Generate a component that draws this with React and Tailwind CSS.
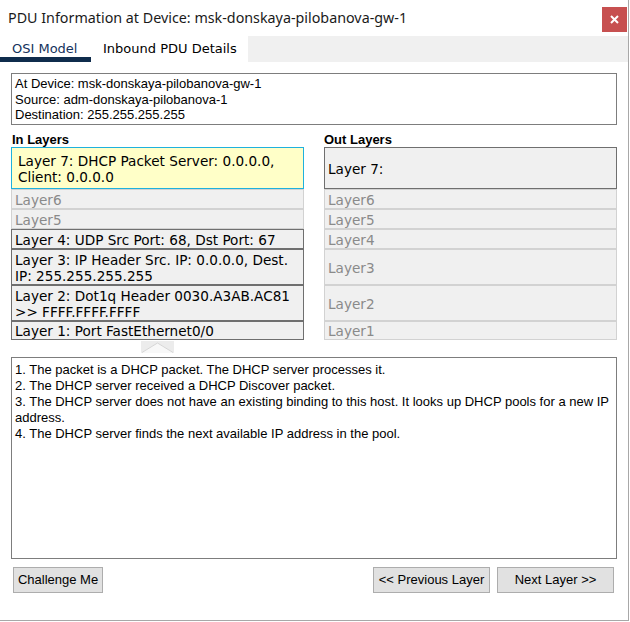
import React from "react";

const inLayers = [
  { lines: ["Layer 7: DHCP Packet Server: 0.0.0.0,", "Client: 0.0.0.0"], h: "h-[42px]", kind: "active" },
  { lines: ["Layer6"], h: "h-[20px]", kind: "off" },
  { lines: ["Layer5"], h: "h-[20px]", kind: "off" },
  { lines: ["Layer 4: UDP Src Port: 68, Dst Port: 67"], h: "h-[20px]", kind: "on" },
  { lines: ["Layer 3: IP Header Src. IP: 0.0.0.0, Dest.", "IP: 255.255.255.255"], h: "h-[36px]", kind: "on" },
  { lines: ["Layer 2: Dot1q Header 0030.A3AB.AC81", ">> FFFF.FFFF.FFFF"], h: "h-[36px]", kind: "on" },
  { lines: ["Layer 1: Port FastEthernet0/0"], h: "h-[19px]", kind: "on" },
];

const outLayers = [
  { lines: ["Layer 7:"], h: "h-[42px]", kind: "on" },
  { lines: ["Layer6"], h: "h-[20px]", kind: "off" },
  { lines: ["Layer5"], h: "h-[20px]", kind: "off" },
  { lines: ["Layer4"], h: "h-[20px]", kind: "off" },
  { lines: ["Layer3"], h: "h-[36px]", kind: "off" },
  { lines: ["Layer2"], h: "h-[36px]", kind: "off" },
  { lines: ["Layer1"], h: "h-[19px]", kind: "off" },
];

const steps = [
  "1. The packet is a DHCP packet. The DHCP server processes it.",
  "2. The DHCP server received a DHCP Discover packet.",
  "3. The DHCP server does not have an existing binding to this host. It looks up DHCP pools for a new IP",
  "address.",
  "4. The DHCP server finds the next available IP address in the pool.",
];

const LayerRow = ({ layer }) => {
  const styles = {
    active: "bg-[#ffffc8] border-[#1fb1dd] text-black pl-[6px]",
    on: "bg-[#f0f0f0] border-[#6f6f6f] text-black pl-[3px]",
    off: "bg-[#f0f0f0] border-[#d2d2d2] text-[#8a8a8a] pl-[3px]",
  };
  return (
    <div className={`${layer.h} border flex items-center leading-[16px] pt-[1px] ${styles[layer.kind]}`}>
      <div className="whitespace-nowrap">
        {layer.lines.map((l, i) => (
          <div key={i}>{l}</div>
        ))}
      </div>
    </div>
  );
};

const App = () => {
  return (
    <div className="w-[630px] h-[622px] bg-white flex overflow-hidden">
      <div className="w-[629px] h-[621px] border-r border-b border-[#a8a8a8] flex flex-col">
        {/* title bar */}
        <div className="h-[36px] flex justify-between shrink-0">
          <div className="pl-[8px] pt-[8px] text-[14.3px] leading-[20px] text-[#1a1a1a] font-['Noto_Sans',sans-serif]">
            PDU Information at Device: msk-donskaya-pilobanova-gw-1
          </div>
          <div className="w-[25px] h-[25px] mt-[7px] mr-[1px] bg-[#c75050] flex items-center justify-center">
            <svg width="9" height="9" viewBox="0 0 9 9">
              <path d="M1 1 L8 8 M8 1 L1 8" stroke="white" strokeWidth="2" />
            </svg>
          </div>
        </div>

        {/* tabs */}
        <div className="h-[26px] flex shrink-0 font-['DejaVu_Sans',sans-serif] text-[13px]">
          <div className="w-[91px] border-b-[5px] border-[#0f2c4c] text-[#14325c] pl-[12px] pt-[5px] leading-[16px]">
            OSI Model
          </div>
          <div className="w-[157px] pl-[12px] pt-[5px] leading-[16px] text-black">Inbound PDU Details</div>
          <div className="flex-1 bg-[#f0f0f0]" />
        </div>

        <div className="px-[11px] flex flex-col font-['Liberation_Sans',Arial,sans-serif] text-[13px]">
          {/* device info */}
          <div className="mt-[11px] h-[52px] w-[606px] border border-[#7d7d7d] pl-[3px] pt-[2px] leading-[15.5px] text-black">
            <div>At Device: msk-donskaya-pilobanova-gw-1</div>
            <div>Source: adm-donskaya-pilobanova-1</div>
            <div>Destination: 255.255.255.255</div>
          </div>

          {/* layers */}
          <div className="flex gap-[20px] w-[606px]">
            <div className="w-[293px] flex flex-col">
              <div className="mt-[7px] h-[15px] leading-[15px] font-bold pl-[1px]">In Layers</div>
              <div className="flex flex-col font-['DejaVu_Sans',sans-serif] text-[13.6px]">
                {inLayers.map((l, i) => (
                  <LayerRow key={i} layer={l} />
                ))}
              </div>
              <div className="ml-[130px] mt-[1px]">
                <svg width="33" height="12" viewBox="0 0 33 12">
                  <rect x="0" y="0" width="33" height="12" fill="#ececec" />
                  <path d="M0 12 L16.5 2 L33 12 Z" fill="#f8f8f8" />
                  <path d="M1 11.5 L16.5 2 L32 11.5" fill="none" stroke="#d6d6d6" strokeWidth="1" />
                </svg>
              </div>
            </div>
            <div className="w-[293px] flex flex-col">
              <div className="mt-[7px] h-[15px] leading-[15px] font-bold">Out Layers</div>
              <div className="flex flex-col font-['DejaVu_Sans',sans-serif] text-[13.6px]">
                {outLayers.map((l, i) => (
                  <LayerRow key={i} layer={l} />
                ))}
              </div>
            </div>
          </div>

          {/* description */}
          <div className="mt-[4px] h-[202px] w-[606px] border border-[#7d7d7d] pl-[3px] pt-[4px] leading-[16px] text-black">
            {steps.map((s, i) => (
              <div key={i} className="whitespace-nowrap">
                {s}
              </div>
            ))}
          </div>

          {/* buttons */}
          <div className="mt-[8px] flex items-center w-[606px]">
            <button className="ml-[2px] w-[90px] h-[26px] bg-[#e1e1e1] border border-[#adadad] text-black">
              Challenge Me
            </button>
            <div className="flex-1" />
            <button className="w-[117px] h-[26px] bg-[#e1e1e1] border border-[#adadad] text-black">
              &lt;&lt; Previous Layer
            </button>
            <button className="ml-[7px] mr-[3px] w-[117px] h-[26px] bg-[#e1e1e1] border border-[#adadad] text-black">
              Next Layer &gt;&gt;
            </button>
          </div>
        </div>
      </div>
    </div>
  );
};

export default App;
